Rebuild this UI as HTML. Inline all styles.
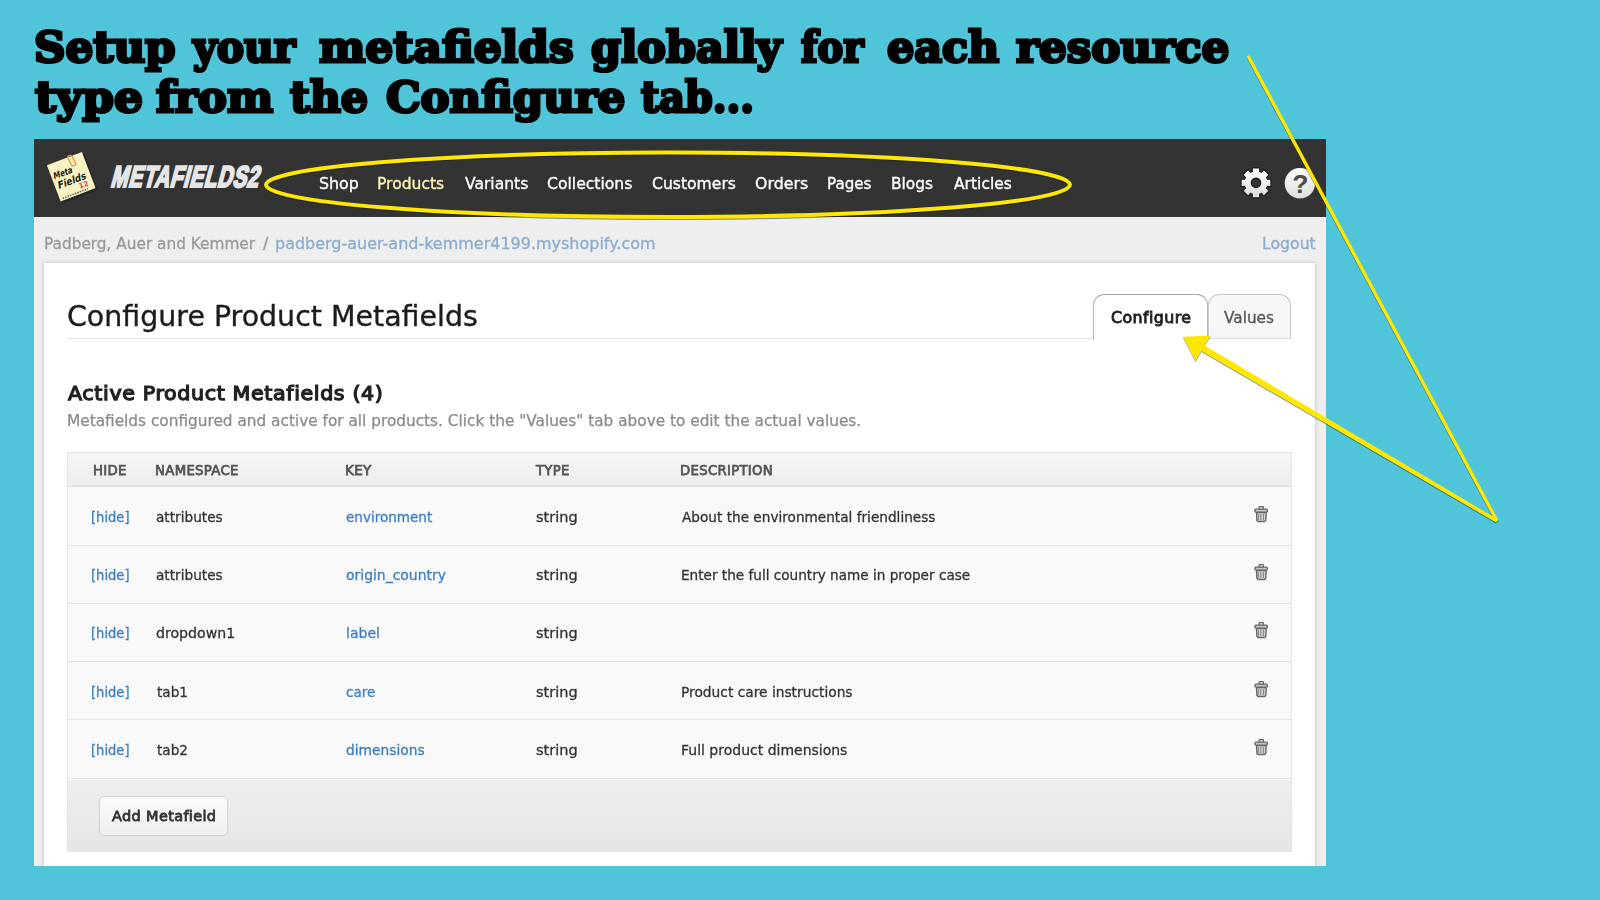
<!DOCTYPE html>
<html lang="en">
<head>
<meta charset="utf-8">
<title>Metafields2 - Configure Product Metafields</title>
<style>
*{box-sizing:border-box;margin:0;padding:0}
html,body{width:1600px;height:900px;overflow:hidden}
body{background:#50c4d8;font-family:"DejaVu Sans","Liberation Sans",sans-serif;color:#222;position:relative}
a{text-decoration:none}
.t{position:absolute;display:block;white-space:nowrap;transform-origin:0 0;line-height:20px;left:0;top:0}

#title{position:absolute;left:0;top:0;font-family:"DejaVu Serif","Liberation Serif",serif;font-weight:bold;font-size:43px;line-height:50px;white-space:nowrap;color:#000;-webkit-text-stroke:3px #000}
#title span{position:absolute;display:block;transform-origin:0 0}

#panel{position:absolute;left:34px;top:139px;width:1292px;height:727px;background:#eeeeee;overflow:hidden}
#hdr{position:absolute;left:0;top:0;width:1292px;height:78px;background:#333333}
#brand{font-family:"Liberation Sans","DejaVu Sans",sans-serif;font-weight:bold;font-size:22px;line-height:24px;color:#e6e6e6;-webkit-text-stroke:1.6px #e6e6e6;letter-spacing:.7px}
.nv{font-size:15.8px;color:#fff;-webkit-text-stroke-width:.35px}
.nv.on{color:#fbf4b5}
.cr{font-size:15.4px;color:#999;-webkit-text-stroke-width:.3px}
.cl{font-size:15.4px;color:#8aaccf;-webkit-text-stroke-width:.3px}

#card{position:absolute;left:10px;top:124px;width:1271px;height:620px;background:#fff;box-shadow:0 0 4px rgba(0,0,0,.22)}
#h1{font-size:27.9px;line-height:40px;color:#1c1c1c;-webkit-text-stroke-width:.35px}
#rule{position:absolute;left:23px;top:75px;width:1225px;height:1px;background:#e3e3e3}
.tab{position:absolute;top:31px;border:1px solid #c9c9c9;border-bottom:none;border-radius:11px 11px 0 0;background:#f7f7f7}
#tab1{left:1049px;width:115px;height:46px;background:#fff;border-color:#a9a9a9 #b5b5b5}
#tab2{left:1164px;width:83px;height:45px;border-bottom:1px solid #dedede}
#tt1{font-size:15.6px;color:#222;-webkit-text-stroke-width:.85px;letter-spacing:.4px}
#tt2{font-size:15.6px;color:#555;-webkit-text-stroke-width:.3px}
#h2{font-size:20px;line-height:26px;color:#222;-webkit-text-stroke-width:1.25px;letter-spacing:.6px}
#sub{font-size:15.4px;color:#8a8a8a;-webkit-text-stroke-width:.25px}

#tbl{position:absolute;left:23px;top:189px;width:1225px;height:400px;border:1px solid #e4e4e4;background:#f9f9f9}
#th{position:absolute;left:0;top:0;width:1223px;height:34px;background:linear-gradient(#f6f6f6,#ececec);border-bottom:1px solid #dcdcdc}
.ht{font-size:13.3px;color:#555;-webkit-text-stroke-width:.75px;letter-spacing:.3px}
.row{position:absolute;left:0;width:1223px;height:1px;background:#e6e6e6}
.rt{font-size:14.5px;color:#333;-webkit-text-stroke-width:.3px}
.lk{color:#3d7fc1}
.trash{position:absolute;left:1185px;width:16px;height:18px;overflow:visible}
#foot{position:absolute;left:0;top:327px;width:1223px;height:71px;background:linear-gradient(#eeeeee,#e6e6e6)}
#btn{position:absolute;left:31px;top:15.5px;width:129px;height:40px;border:1px solid #d3d3d3;border-radius:5px;background:linear-gradient(#fafafa,#efefef)}
#bt{font-size:14.5px;color:#333;-webkit-text-stroke-width:.8px;letter-spacing:.35px}
svg.ov{position:absolute;left:0;top:0;width:1600px;height:900px;pointer-events:none}
/*FIT-START*/
#brand{left:82.80px;top:22.40px;transform:skewX(-15deg) scaleY(1.36) scaleX(0.9331)}
#n1{left:285.00px;top:35.20px;transform:scaleX(1.0005)}
#n2{left:343.00px;top:35.20px;transform:scaleX(0.9855)}
#n3{left:431.00px;top:35.20px;transform:scaleX(0.9847)}
#n4{left:513.00px;top:35.20px;transform:scaleX(0.9883)}
#n5{left:618.00px;top:35.20px;transform:scaleX(0.9880)}
#n6{left:721.00px;top:35.20px;transform:scaleX(1.0004)}
#n7{left:793.00px;top:35.20px;transform:scaleX(0.9562)}
#n8{left:857.00px;top:35.20px;transform:scaleX(0.9763)}
#n9{left:920.00px;top:35.20px;transform:scaleX(0.9828)}
#c1{left:10.00px;top:94.61px;transform:scaleX(0.9953)}
#c2{left:229.00px;top:94.61px;transform:scaleX(1.0000)}
#c3{left:241.00px;top:94.61px;transform:scaleX(1.0385)}
#c4{left:1228.00px;top:94.81px;transform:scaleX(1.0200)}
#h1{left:23.00px;top:34.31px;transform:scaleX(1.0200)}
#tt1{left:1067.00px;top:44.50px;transform:scaleX(1.0161)}
#tt2{left:1180.00px;top:44.50px;transform:scaleX(0.9805)}
#h2{left:24.10px;top:116.50px;transform:scaleX(1.0316)}
#sub{left:23.00px;top:148.41px;transform:scaleX(0.9950)}
#k1{left:25.30px;top:8.40px;transform:scaleX(0.9975)}
#k2{left:86.90px;top:8.40px;transform:scaleX(0.9991)}
#k3{left:276.50px;top:8.40px;transform:scaleX(1.0187)}
#k4{left:468.20px;top:8.40px;transform:scaleX(0.9917)}
#k5{left:611.60px;top:8.40px;transform:scaleX(0.9965)}
#r1a{left:23.00px;top:53.61px;transform:scaleX(0.9030)}
#r1b{left:88.00px;top:53.61px;transform:scaleX(0.9422)}
#r1c{left:278.00px;top:53.61px;transform:scaleX(0.9342)}
#r1d{left:468.00px;top:53.61px;transform:scaleX(1.0008)}
#r1e{left:614.00px;top:53.61px;transform:scaleX(0.9405)}
#r2a{left:23.00px;top:111.91px;transform:scaleX(0.9030)}
#r2b{left:88.00px;top:111.91px;transform:scaleX(0.9422)}
#r2c{left:278.00px;top:111.91px;transform:scaleX(0.9613)}
#r2d{left:468.00px;top:111.91px;transform:scaleX(1.0008)}
#r2e{left:613.00px;top:111.91px;transform:scaleX(0.9381)}
#r3a{left:23.00px;top:170.20px;transform:scaleX(0.9030)}
#r3b{left:88.00px;top:170.20px;transform:scaleX(0.9747)}
#r3c{left:278.00px;top:170.20px;transform:scaleX(0.9701)}
#r3d{left:468.00px;top:170.20px;transform:scaleX(1.0008)}
#r4a{left:23.00px;top:228.50px;transform:scaleX(0.9030)}
#r4b{left:89.00px;top:228.50px;transform:scaleX(0.9375)}
#r4c{left:278.00px;top:228.50px;transform:scaleX(0.9333)}
#r4d{left:468.00px;top:228.50px;transform:scaleX(1.0008)}
#r4e{left:613.00px;top:228.50px;transform:scaleX(0.9498)}
#r5a{left:23.00px;top:286.81px;transform:scaleX(0.9030)}
#r5b{left:89.00px;top:286.81px;transform:scaleX(0.9375)}
#r5c{left:278.00px;top:286.81px;transform:scaleX(0.9508)}
#r5d{left:468.00px;top:286.81px;transform:scaleX(1.0008)}
#r5e{left:613.00px;top:286.81px;transform:scaleX(0.9649)}
#bt{left:44.00px;top:25.61px;transform:scaleX(0.9989)}
/*FIT-END*/
</style>
</head>
<body>
<div id="title"><span style="left:34px;top:21.5px;transform:scaleX(1.0145)">Setup</span> <span style="left:193px;top:21.5px;transform:scaleX(0.9509)">your</span> <span style="left:318.8px;top:21.5px;transform:scaleX(1.0191)">metafields</span> <span style="left:591px;top:21.5px;transform:scaleX(0.9987)">globally</span> <span style="left:801px;top:21.5px;transform:scaleX(0.8958)">for</span> <span style="left:886.5px;top:21.5px;transform:scaleX(0.9956)">each</span> <span style="left:1015.5px;top:21.5px;transform:scaleX(1.0143)">resource</span>
<span style="left:35px;top:72.2px;transform:scaleX(1.0539)">type</span> <span style="left:156px;top:72.2px;transform:scaleX(1.0151)">from</span> <span style="left:290px;top:72.2px;transform:scaleX(0.9936)">the</span> <span style="left:385.5px;top:72.2px;transform:scaleX(1.0105)">Configure</span> <span style="left:641px;top:72.2px;transform:scaleX(0.9215)">tab...</span></div>

<div id="panel">
  <div id="hdr">
    <svg style="position:absolute;left:0;top:0;width:110px;height:78px" viewBox="34 139 110 78">
  <g transform="translate(46.9,165.2) rotate(-20.8)">
    <rect x="1.5" y="2.5" width="37.4" height="38.7" fill="#1c1c1c" opacity=".55"/>
    <rect x="0" y="0" width="37.4" height="38.7" fill="#f9f3c3"/>
    <g font-family="DejaVu Sans, Liberation Sans, sans-serif" font-weight="bold" fill="#1a1a1a">
      <text x="5" y="16" font-size="9" transform="skewX(-12)" textLength="20" lengthAdjust="spacingAndGlyphs">Meta</text>
      <text x="8" y="26.6" font-size="10" transform="skewX(-12)" textLength="30" lengthAdjust="spacingAndGlyphs">Fields</text>
      <text x="22.5" y="33.6" font-size="7" fill="#d9414f">12</text>
    </g>
    <line x1="3" y1="36.6" x2="30" y2="36.6" stroke="#555" stroke-width="1.4" stroke-dasharray="1.5 1.1"/>
    <rect x="22.6" y="-1.4" width="4.4" height="11.6" rx="2.2" fill="none" stroke="#e8902e" stroke-width="1.2" transform="rotate(-8 25 4)"/>
  </g>
</svg>
    <svg class="abs" style="left:1206px;top:28px;width:80px;height:32px;position:absolute" viewBox="1240 167 80 32">
  <defs><linearGradient id="gg" x1="0" y1="0" x2="0" y2="1"><stop offset="0" stop-color="#ffffff"/><stop offset="1" stop-color="#dcdcdc"/></linearGradient></defs>
  <g transform="translate(1256,182.8)"><path d="M10.99,-3.04 L14.36,-3.14 L14.36,3.14 L10.99,3.04 L9.92,5.62 L12.37,7.94 L7.94,12.37 L5.62,9.92 L3.04,10.99 L3.14,14.36 L-3.14,14.36 L-3.04,10.99 L-5.62,9.92 L-7.94,12.37 L-12.37,7.94 L-9.92,5.62 L-10.99,3.04 L-14.36,3.14 L-14.36,-3.14 L-10.99,-3.04 L-9.92,-5.62 L-12.37,-7.94 L-7.94,-12.37 L-5.62,-9.92 L-3.04,-10.99 L-3.14,-14.36 L3.14,-14.36 L3.04,-10.99 L5.62,-9.92 L7.94,-12.37 L12.37,-7.94 L9.92,-5.62Z" fill="url(#gg)" stroke="#1d1d1d" stroke-width="2.6" stroke-linejoin="round" paint-order="stroke fill"/></g>
  <circle cx="1256" cy="182.8" r="4.5" fill="#343434" stroke="#202020" stroke-width="1.7"/>
  <circle cx="1299.9" cy="183.3" r="15.2" fill="url(#gg)"/>
  <text x="1300.3" y="193.2" text-anchor="middle" font-family="Liberation Sans, DejaVu Sans, sans-serif" font-weight="bold" font-size="26.5" fill="#514c47">?</text>
</svg>
    <div class="t" id="brand">METAFIELDS2</div>
    <span class="t nv" id="n1">Shop</span> <span class="t nv on" id="n2">Products</span> <span class="t nv" id="n3">Variants</span> <span class="t nv" id="n4">Collections</span> <span class="t nv" id="n5">Customers</span> <span class="t nv" id="n6">Orders</span> <span class="t nv" id="n7">Pages</span> <span class="t nv" id="n8">Blogs</span> <span class="t nv" id="n9">Articles</span>
  </div>
  <span class="t cr" id="c1">Padberg, Auer and Kemmer</span> <span class="t cr" id="c2">/</span> <a class="t cl" id="c3">padberg-auer-and-kemmer4199.myshopify.com</a>
  <a class="t cl" id="c4">Logout</a>

  <div id="card">
    <div class="t" id="h1">Configure Product Metafields</div>
    <div id="rule"></div>
    <div class="tab" id="tab2"></div>
    <div class="tab" id="tab1"></div>
    <span class="t" id="tt1">Configure</span> <span class="t" id="tt2">Values</span>
    <div class="t" id="h2">Active Product Metafields (4)</div>
    <div class="t" id="sub">Metafields configured and active for all products. Click the "Values" tab above to edit the actual values.</div>

    <div id="tbl">
      <div id="th"></div>
      <span class="t ht" id="k1">HIDE</span> <span class="t ht" id="k2">NAMESPACE</span> <span class="t ht" id="k3">KEY</span> <span class="t ht" id="k4">TYPE</span> <span class="t ht" id="k5">DESCRIPTION</span>
      <div class="row" style="top:92px"></div>
      <a class="t rt lk" id="r1a">[hide]</a><span class="t rt" id="r1b">attributes</span><a class="t rt lk" id="r1c">environment</a><span class="t rt" id="r1d">string</span><span class="t rt" id="r1e">About the environmental friendliness</span><svg class="trash" style="top:51.8px" viewBox="0 0 16 18"><path d="M3.5,7.6 L13.2,7.6 L12.8,15.4 L11.6,16.5 L5,16.5 L3.9,15.4 Z" fill="#d2d2d2" stroke="#666" stroke-width="1.35" stroke-linejoin="round"/><path d="M5.3,9v6M7.8,9v6M10.4,9v6" stroke="#777" stroke-width=".9" fill="none"/><rect x="1.9" y="4.2" width="12.5" height="2.9" rx="1" fill="#c4c4c4" stroke="#666" stroke-width="1.3"/><rect x="6.1" y="1.6" width="4.3" height="2.4" rx=".5" fill="#e4e4e4" stroke="#666" stroke-width="1.2"/></svg>
      <div class="row" style="top:150px"></div>
      <a class="t rt lk" id="r2a">[hide]</a><span class="t rt" id="r2b">attributes</span><a class="t rt lk" id="r2c">origin_country</a><span class="t rt" id="r2d">string</span><span class="t rt" id="r2e">Enter the full country name in proper case</span><svg class="trash" style="top:110.1px" viewBox="0 0 16 18"><path d="M3.5,7.6 L13.2,7.6 L12.8,15.4 L11.6,16.5 L5,16.5 L3.9,15.4 Z" fill="#d2d2d2" stroke="#666" stroke-width="1.35" stroke-linejoin="round"/><path d="M5.3,9v6M7.8,9v6M10.4,9v6" stroke="#777" stroke-width=".9" fill="none"/><rect x="1.9" y="4.2" width="12.5" height="2.9" rx="1" fill="#c4c4c4" stroke="#666" stroke-width="1.3"/><rect x="6.1" y="1.6" width="4.3" height="2.4" rx=".5" fill="#e4e4e4" stroke="#666" stroke-width="1.2"/></svg>
      <div class="row" style="top:208px"></div>
      <a class="t rt lk" id="r3a">[hide]</a><span class="t rt" id="r3b">dropdown1</span><a class="t rt lk" id="r3c">label</a><span class="t rt" id="r3d">string</span><svg class="trash" style="top:168.4px" viewBox="0 0 16 18"><path d="M3.5,7.6 L13.2,7.6 L12.8,15.4 L11.6,16.5 L5,16.5 L3.9,15.4 Z" fill="#d2d2d2" stroke="#666" stroke-width="1.35" stroke-linejoin="round"/><path d="M5.3,9v6M7.8,9v6M10.4,9v6" stroke="#777" stroke-width=".9" fill="none"/><rect x="1.9" y="4.2" width="12.5" height="2.9" rx="1" fill="#c4c4c4" stroke="#666" stroke-width="1.3"/><rect x="6.1" y="1.6" width="4.3" height="2.4" rx=".5" fill="#e4e4e4" stroke="#666" stroke-width="1.2"/></svg>
      <div class="row" style="top:266px"></div>
      <a class="t rt lk" id="r4a">[hide]</a><span class="t rt" id="r4b">tab1</span><a class="t rt lk" id="r4c">care</a><span class="t rt" id="r4d">string</span><span class="t rt" id="r4e">Product care instructions</span><svg class="trash" style="top:226.7px" viewBox="0 0 16 18"><path d="M3.5,7.6 L13.2,7.6 L12.8,15.4 L11.6,16.5 L5,16.5 L3.9,15.4 Z" fill="#d2d2d2" stroke="#666" stroke-width="1.35" stroke-linejoin="round"/><path d="M5.3,9v6M7.8,9v6M10.4,9v6" stroke="#777" stroke-width=".9" fill="none"/><rect x="1.9" y="4.2" width="12.5" height="2.9" rx="1" fill="#c4c4c4" stroke="#666" stroke-width="1.3"/><rect x="6.1" y="1.6" width="4.3" height="2.4" rx=".5" fill="#e4e4e4" stroke="#666" stroke-width="1.2"/></svg>
      <div class="row" style="top:325px"></div>
      <a class="t rt lk" id="r5a">[hide]</a><span class="t rt" id="r5b">tab2</span><a class="t rt lk" id="r5c">dimensions</a><span class="t rt" id="r5d">string</span><span class="t rt" id="r5e">Full product dimensions</span><svg class="trash" style="top:285.0px" viewBox="0 0 16 18"><path d="M3.5,7.6 L13.2,7.6 L12.8,15.4 L11.6,16.5 L5,16.5 L3.9,15.4 Z" fill="#d2d2d2" stroke="#666" stroke-width="1.35" stroke-linejoin="round"/><path d="M5.3,9v6M7.8,9v6M10.4,9v6" stroke="#777" stroke-width=".9" fill="none"/><rect x="1.9" y="4.2" width="12.5" height="2.9" rx="1" fill="#c4c4c4" stroke="#666" stroke-width="1.3"/><rect x="6.1" y="1.6" width="4.3" height="2.4" rx=".5" fill="#e4e4e4" stroke="#666" stroke-width="1.2"/></svg>
      <div id="foot"><div id="btn"></div><span class="t" id="bt">Add Metafield</span></div>
    </div>
  </div>
</div>

<svg class="ov" viewBox="0 0 1600 900" style="filter:drop-shadow(.4px 1px .7px rgba(0,0,30,.45))">
  <ellipse cx="668" cy="184.8" rx="402" ry="32.2" fill="none" stroke="#ffe800" stroke-width="4"/>
  <line x1="1248" y1="56" x2="1497" y2="521" stroke="#ffe800" stroke-width="3.4"/>
  <polygon points="1201.4,351 1204.6,345.5 1497.9,519.5 1496.1,522.5" fill="#ffe800"/>
  <polygon points="1183,336.8 1210.5,335.5 1195.5,361" fill="#ffe800"/>
</svg>
</body>
</html>
